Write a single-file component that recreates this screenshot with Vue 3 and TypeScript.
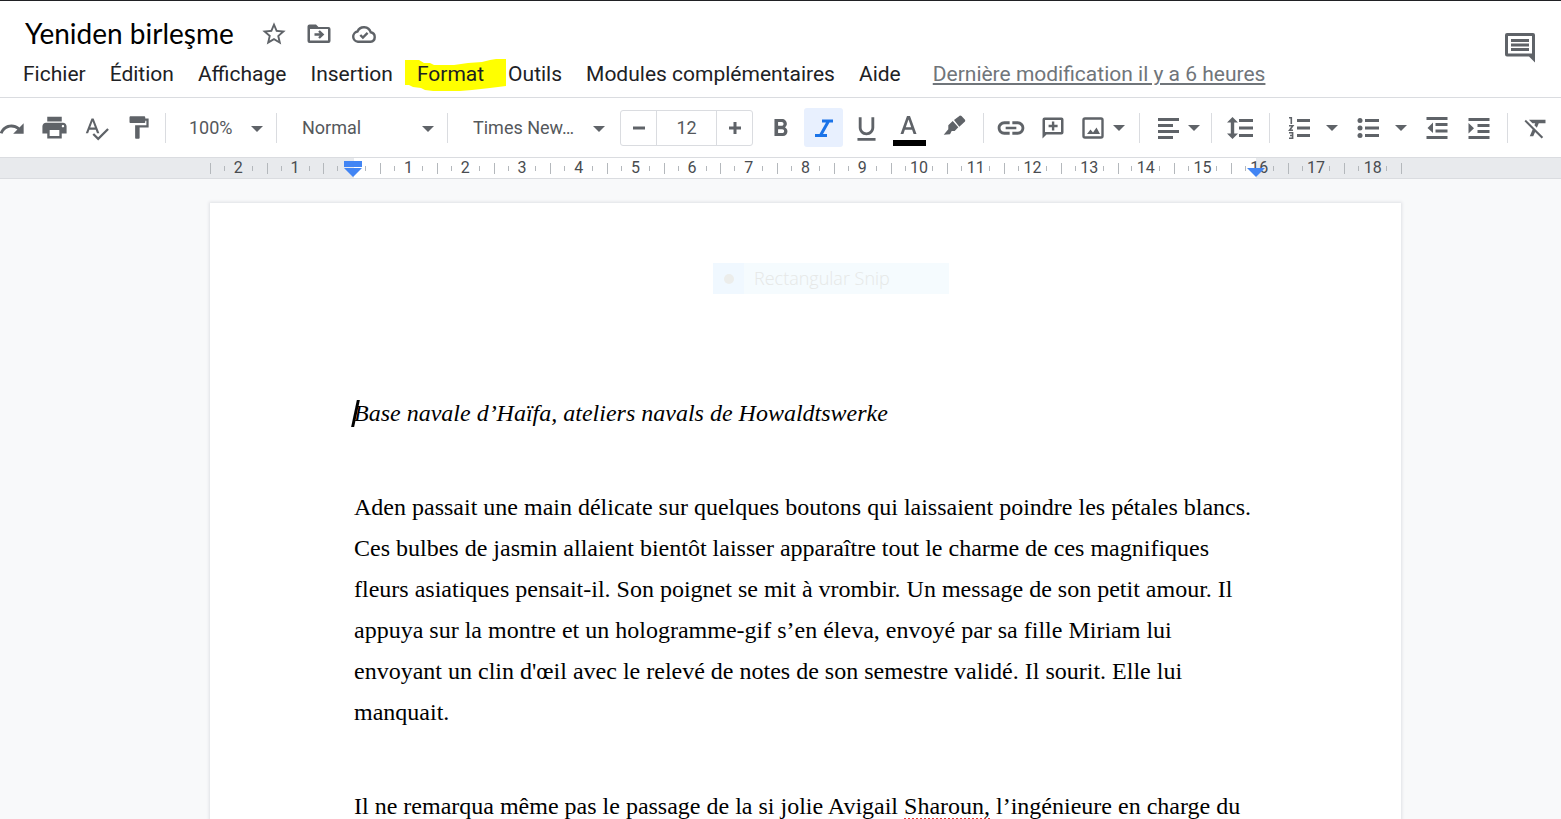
<script setup lang="ts">
import { ref } from 'vue'

const title = ref('Yeniden birleşme')
const fontSize = ref(12)
const menusBefore = ['Fichier', 'Édition', 'Affichage', 'Insertion']
const menusAfter = ['Outils', 'Modules complémentaires', 'Aide']
const rulerCells = ['2', '1', '', ...Array.from({ length: 18 }, (_, i) => String(i + 1))]
</script>

<template>
  <div class="app">
    <header class="header">
      <div class="header-main">
        <div class="title-row">
          <h1 class="title">{{ title }}</h1>
          <button class="icon-btn title-btn" aria-label="Suivre">
            <svg width="28" height="28" viewBox="0 0 24 24"><path d="M22 9.24l-7.19-.62L12 2 9.19 8.63 2 9.24l5.46 4.73L5.82 21 12 17.27 18.18 21l-1.63-7.03L22 9.24zM12 15.4l-3.76 2.27 1-4.28-3.32-2.88 4.38-.38L12 6.1l1.71 4.04 4.38.38-3.32 2.88 1 4.28L12 15.4z" /></svg>
          </button>
          <button class="icon-btn title-btn" aria-label="Déplacer">
            <svg width="28" height="28" viewBox="0 0 28 28">
              <path d="M4.5 4.500h6.500l2.500 2.500h10a2 2 0 0 1 2 2v12a2 2 0 0 1-2 2h-19a2 2 0 0 1-2-2V6.500a2 2 0 0 1 2-2zM5 9v11.500h18V9z" fill-rule="evenodd" />
              <path d="M9.500 14.500h8M14 11l3.600 3.500L14 18" class="line" />
            </svg>
          </button>
          <button class="icon-btn title-btn" aria-label="État du document">
            <svg width="28" height="28" viewBox="0 0 28 28">
              <path d="M8 21.800a5.200 5.200 0 0 1-.5-10.300A7 7 0 0 1 20.700 12.300 4.800 4.800 0 0 1 20.500 21.800z" class="line" />
              <path d="M10.300 15l2.600 2.600 4.700-4.700" class="line" />
            </svg>
          </button>
        </div>
        <nav class="menus">
          <button v-for="m in menusBefore" :key="m" class="menu">{{ m }}</button>
          <button class="menu menu-marked">
            <svg class="marker" width="101" height="34" viewBox="0 0 101 34"><path d="M0 1h14l5 3h6l4 2h20l14-2 14-1 8-2 6-1h10v27l-16 2-18 2-12 1H28l-8-1-4-2-8-1-4-2H0z" /></svg>
            <span>Format</span>
          </button>
          <button v-for="m in menusAfter" :key="m" class="menu">{{ m }}</button>
          <a class="last-edit" href="#">Dernière modification il y a 6 heures</a>
        </nav>
      </div>
      <button class="icon-btn comments" aria-label="Commentaires">
        <svg width="32" height="32" viewBox="0 0 32 32">
          <path d="M3 1h26a2 2 0 0 1 2 2v27.500l-6-6H3a2 2 0 0 1-2-2V3a2 2 0 0 1 2-2zM4 4v17.500h24V4z" fill-rule="evenodd" />
          <path d="M7 7h18v3H7zM7 11.500h18v3H7zM7 16h18v3H7z" />
        </svg>
      </button>
    </header>

    <div class="toolbar" role="toolbar" aria-label="Mise en forme">
      <div class="group history">
        <button class="icon-btn" aria-label="Rétablir">
          <svg width="28" height="28" viewBox="0 -1 24 24"><path d="M18.400 10.600C16.550 8.990 14.150 8 11.500 8c-4.650 0-8.580 3.030-9.960 7.220L3.900 16c1.050-3.190 4.050-5.500 7.600-5.500 1.950 0 3.730.72 5.120 1.880L13 16h9V7z" /></svg>
        </button>
        <button class="icon-btn" aria-label="Imprimer">
          <svg width="29" height="29" viewBox="0 0 24 24"><path d="M19 8H5c-1.660 0-3 1.340-3 3v6h4v4h12v-4h4v-6c0-1.660-1.340-3-3-3zm-3 11H8v-5h8v5zm3-7c-.55 0-1-.45-1-1s.45-1 1-1 1 .45 1 1-.45 1-1 1zm-1-9H6v4h12V3z" /></svg>
        </button>
        <button class="icon-btn" aria-label="Orthographe">
          <svg width="27" height="27" viewBox="0 -1 24 24"><path d="M12.450 16h2.090L9.430 3H7.570L2.460 16h2.090l1.120-3h5.640l1.140 3zm-6.020-5L8.500 5.480 10.570 11H6.430zm15.160.59l-8.090 8.090L9.830 16l-1.410 1.410 5.090 5.090L23 13l-1.410-1.410z" /></svg>
        </button>
        <button class="icon-btn" aria-label="Reproduire la mise en forme">
          <svg width="27" height="27" viewBox="0 0 24 24"><path d="M18 4V3c0-.55-.45-1-1-1H5c-.55 0-1 .45-1 1v4c0 .55.45 1 1 1h12c.55 0 1-.45 1-1V6h1v4H9v11c0 .55.45 1 1 1h2c.55 0 1-.45 1-1v-9h8V4h-3z" /></svg>
        </button>
      </div>
      <span class="sep"></span>
      <div class="drop drop-zoom">
        <select aria-label="Zoom"><option>100%</option></select>
        <svg class="caret" width="12" height="6" viewBox="0 0 12 6"><path d="M0 0h12L6 6z" /></svg>
      </div>
      <span class="sep"></span>
      <div class="drop">
        <select aria-label="Style"><option>Normal</option></select>
        <svg class="caret" width="12" height="6" viewBox="0 0 12 6"><path d="M0 0h12L6 6z" /></svg>
      </div>
      <span class="sep"></span>
      <div class="drop">
        <select aria-label="Police"><option>Times New…</option></select>
        <svg class="caret" width="12" height="6" viewBox="0 0 12 6"><path d="M0 0h12L6 6z" /></svg>
      </div>
      <div class="stepper">
        <button aria-label="Réduire la taille" @click="fontSize--">
          <svg width="14" height="14" viewBox="0 0 14 14"><path d="M1 5.500h12v3H1z" /></svg>
        </button>
        <input v-model="fontSize" aria-label="Taille de police" />
        <button aria-label="Augmenter la taille" @click="fontSize++">
          <svg width="14" height="14" viewBox="0 0 14 14"><path d="M5.500 1h3v4.500H13v3H8.500V13h-3V8.500H1v-3h4.500z" /></svg>
        </button>
      </div>
      <div class="group format">
        <button class="icon-btn" aria-label="Gras">
          <svg width="29" height="29" viewBox="0 -1 24 24"><path d="M15.600 10.790c.97-.67 1.650-1.770 1.650-2.790 0-2.260-1.750-4-4-4H7v14h7.040c2.090 0 3.710-1.700 3.710-3.790 0-1.520-.86-2.820-2.150-3.420zM10 6.500h3c.83 0 1.500.67 1.500 1.500s-.67 1.500-1.500 1.500h-3v-3zm3.500 9H10v-3h3.500c.83 0 1.500.67 1.500 1.500s-.67 1.500-1.500 1.500z" /></svg>
        </button>
        <button class="icon-btn active" aria-label="Italique" aria-pressed="true">
          <svg width="28" height="28" viewBox="0 0 28 28"><path d="M12 5.500h11v3h-3.500L13 20h4v3H5v-3h4.500L16 8.500h-4z" /></svg>
        </button>
        <button class="icon-btn" aria-label="Souligné">
          <svg width="31" height="31" viewBox="0 -1 24 24"><path d="M12 17c3.310 0 6-2.690 6-6V3h-2.200v8c0 2.100-1.700 3.800-3.800 3.800S8.200 13.100 8.200 11V3H6v8c0 3.310 2.690 6 6 6zm-7 2.200v2h14v-2H5z" /></svg>
        </button>
        <button class="icon-btn" aria-label="Couleur du texte">
          <svg width="33" height="36" viewBox="0 0 33 36">
            <path d="M14 6h3l6.500 18h-2.900l-1.500-4.300h-7.200L10.400 24H7.500zM12.800 17.200h5.400L15.500 9.400z" fill-rule="evenodd" />
            <path d="M0 30h33v6H0z" class="ink" />
          </svg>
        </button>
        <button class="icon-btn" aria-label="Surlignage">
          <svg width="28" height="28" viewBox="0 0 28 28"><path d="M15 6L21 1.500q1 0 1.500.5l3.500 3.700q.5 1 0 1.800L20.300 12.700zM13.700 7l5.600 6.300-3.600 3.700h-3L11 20.300l-6.300.4 4.600-5.400v-4z" /></svg>
        </button>
      </div>
      <span class="sep"></span>
      <div class="group insert">
        <button class="icon-btn" aria-label="Insérer un lien">
          <svg width="32" height="32" viewBox="0 0 24 24"><path d="M4.100 12c0-1.600 1.300-2.900 2.900-2.900h4V7H7c-2.760 0-5 2.240-5 5s2.240 5 5 5h4v-2.100H7c-1.600 0-2.900-1.300-2.900-2.900zM8 13h8v-2H8v2zm9-6h-4v2.100h4c1.600 0 2.900 1.300 2.900 2.900s-1.300 2.900-2.900 2.900h-4V17h4c2.760 0 5-2.240 5-5s-2.240-5-5-5z" /></svg>
        </button>
        <button class="icon-btn" aria-label="Ajouter un commentaire">
          <svg width="28" height="28" viewBox="0 0 28 28">
            <path d="M5.500 3.500h17a2 2 0 0 1 2 2v13a2 2 0 0 1-2 2h-15l-4 4v-19a2 2 0 0 1 2-2zM6 6v12h16V6z" fill-rule="evenodd" />
            <path d="M12.900 7.500h2.400v3.300h3.300v2.400h-3.300v3.300h-2.400v-3.300H9.600v-2.400h3.300z" />
          </svg>
        </button>
        <button class="icon-btn slim" aria-label="Insérer une image">
          <svg width="28" height="28" viewBox="0 0 28 28">
            <rect x="4.500" y="4.500" width="19" height="19" rx="1.500" class="line" />
            <path d="M8 20l3.500-4.500 2.500 3 3.500-5L21 20z" />
          </svg>
        </button>
        <button class="icon-btn arrow" aria-label="Options d’image"><svg width="12" height="6" viewBox="0 0 12 6"><path d="M0 0h12L6 6z" /></svg></button>
      </div>
      <span class="sep"></span>
      <div class="group align">
        <button class="icon-btn slim" aria-label="Aligner">
          <svg width="28" height="28" viewBox="0 0 28 28"><path d="M4 4h21v3H4zM4 10h15v3H4zM4 16h21v3H4zM4 22h15v3H4z" /></svg>
        </button>
        <button class="icon-btn arrow" aria-label="Options d’alignement"><svg width="12" height="6" viewBox="0 0 12 6"><path d="M0 0h12L6 6z" /></svg></button>
      </div>
      <span class="sep"></span>
      <div class="group spacing">
        <button class="icon-btn slim" aria-label="Interligne">
          <svg width="28" height="28" viewBox="0 0 28 28"><path d="M6.500 3l5.500 5.500H8.200v11H12L6.500 25 1 19.500h3.800v-11H1zM13 5h14v3H13zM13 12.500h14v3H13zM13 20h14v3H13z" /></svg>
        </button>
      </div>
      <span class="sep"></span>
      <div class="group lists">
        <button class="icon-btn slim" aria-label="Liste numérotée">
          <svg width="28" height="28" viewBox="0 0 28 28">
            <path d="M12 5h13v3H12zM12 12.500h13v3H12zM12 20h13v3H12z" />
            <path d="M4 3.800h2.300V10M4 11.800h3.800L4.600 16.300H8M4 18.800h3.600v5.400H4M5 21.500h2.500" class="thin" />
          </svg>
        </button>
        <button class="icon-btn arrow wide" aria-label="Options de liste numérotée"><svg width="12" height="6" viewBox="0 0 12 6"><path d="M0 0h12L6 6z" /></svg></button>
        <button class="icon-btn slim" aria-label="Liste à puces">
          <svg width="28" height="28" viewBox="0 0 28 28">
            <circle cx="6" cy="6.500" r="2.500" /><circle cx="6" cy="14" r="2.500" /><circle cx="6" cy="21.500" r="2.500" />
            <path d="M11 5h14v3H11zM11 12.500h14v3H11zM11 20h14v3H11z" />
          </svg>
        </button>
        <button class="icon-btn arrow wide" aria-label="Options de liste à puces"><svg width="12" height="6" viewBox="0 0 12 6"><path d="M0 0h12L6 6z" /></svg></button>
        <button class="icon-btn slim" aria-label="Diminuer le retrait">
          <svg width="28" height="28" viewBox="0 0 28 28"><path d="M3.500 3h21v3h-21zM12.500 9h12v3h-12zM12.500 15.500h12v3h-12zM3.500 22h21v3h-21zM10 8.500v10.500L4.500 14z" /></svg>
        </button>
        <button class="icon-btn slim" aria-label="Augmenter le retrait">
          <svg width="28" height="28" viewBox="0 0 28 28"><path d="M3.500 4h21v3h-21zM12.500 10h12v3h-12zM12.500 16h12v3h-12zM3.500 22h21v3h-21zM3.500 9v10.500L9 14.200z" /></svg>
        </button>
      </div>
      <span class="sep"></span>
      <div class="group clear">
        <button class="icon-btn slim" aria-label="Supprimer la mise en forme">
          <svg width="28" height="28" viewBox="-1 0 24 24"><path d="M3.270 5L2 6.270l6.970 6.970L6.500 19h3l1.570-3.660L16.730 21 18 19.730 3.550 5.270zM6 5v.18L8.820 8h2.400l-.72 1.680 2.100 2.100L14.210 8H20V5H6z" /></svg>
        </button>
      </div>
    </div>

    <div class="ruler">
      <div class="track">
        <div class="zone"></div>
        <div v-for="(n, i) in rulerCells" :key="i" class="cell"><span>{{ n }}</span></div>
        <svg class="indent-left" width="18" height="16" viewBox="0 0 18 16"><path d="M0 0h18v6H0zM0 7h18l-9 9z" /></svg>
        <svg class="indent-right" width="18" height="9" viewBox="0 0 18 9"><path d="M0 0h18l-9 9z" /></svg>
      </div>
    </div>

    <main class="canvas">
      <article class="page">
        <p class="lead"><span class="cursor"></span><em>Base navale d’Haïfa, ateliers navals de Howaldtswerke</em></p>
        <p>Aden passait une main délicate sur quelques boutons qui laissaient poindre les pétales blancs. Ces bulbes de jasmin allaient bientôt laisser apparaître tout le charme de ces magnifiques fleurs asiatiques pensait-il. Son poignet se mit à vrombir. Un message de son petit amour. Il appuya sur la montre et un hologramme-gif s’en éleva, envoyé par sa fille Miriam lui envoyant un clin d'œil avec le relevé de notes de son semestre validé. Il sourit. Elle lui manquait.</p>
        <p>Il ne remarqua même pas le passage de la si jolie Avigail <span class="typo">Sharoun,</span> l’ingénieure en charge du</p>
        <div class="snip"><span class="snip-dot"></span><span class="snip-label">Rectangular Snip</span></div>
      </article>
    </main>
  </div>
</template>

<style>
body {
  margin: 0;
}
</style>

<style scoped>
.app {
  height: 100vh;
  display: flex;
  flex-direction: column;
  overflow: hidden;
  box-sizing: border-box;
  border-top: 1px solid #202124;
  background: #f8f9fa;
  color: #202124;
  font-family: Roboto, "Liberation Sans", sans-serif;
}
button,
select,
input {
  font: inherit;
  color: inherit;
  border: 0;
  padding: 0;
  margin: 0;
  background: none;
}
svg {
  display: block;
  flex: none;
  fill: #5f6368;
}
.line {
  fill: none;
  stroke: #5f6368;
  stroke-width: 2.4;
}
.thin {
  fill: none;
  stroke: #5f6368;
  stroke-width: 1.6;
}
.ink {
  fill: #000;
}
.header {
  display: flex;
  justify-content: space-between;
  flex: none;
  background: #fff;
  border-bottom: 1px solid #dadce0;
  padding: 14px 25px 2px 23px;
}
.title-row {
  display: flex;
  align-items: center;
  height: 38px;
}
.title {
  margin: 0 18px 0 2px;
  padding-bottom: 2px;
  font: 400 28px/36px Lato, "Open Sans", sans-serif;
  color: #000;
  white-space: nowrap;
}
.icon-btn {
  display: flex;
  align-items: center;
  justify-content: center;
  flex: none;
  width: 42px;
  height: 39px;
  border-radius: 3px;
}
.title-btn {
  width: 45px;
}
.menus {
  display: flex;
  align-items: center;
  gap: 24px;
  height: 42px;
  font-size: 21px;
  line-height: 28px;
  white-space: nowrap;
}
.menu-marked {
  position: relative;
}
.menu-marked span {
  position: relative;
}
.marker {
  position: absolute;
  left: -12px;
  top: -1px;
  fill: #ff0;
}
.last-edit {
  margin-left: 8px;
  color: #70757a;
  text-decoration: underline;
}
.comments {
  width: 32px;
  height: 32px;
  margin-top: 17px;
}
.toolbar {
  display: flex;
  align-items: center;
  flex: none;
  height: 59px;
  overflow: hidden;
  background: #fff;
  border-bottom: 1px solid #dadce0;
  color: #55585c;
  font-size: 18px;
}
.sep {
  flex: none;
  width: 1px;
  height: 30px;
  margin: 0 5px;
  background: #dadce0;
}
.group {
  display: flex;
  flex: none;
  align-items: center;
}
.history {
  margin-left: -9px;
  padding-right: 1px;
}
.drop {
  position: relative;
  flex: none;
  width: 160px;
}
.drop-zoom {
  width: 100px;
}
.drop select {
  width: 100%;
  height: 36px;
  padding-left: 20px;
  appearance: none;
}
.drop-zoom select {
  padding-left: 18px;
}
.caret {
  position: absolute;
  right: 8px;
  top: 16px;
  pointer-events: none;
}
.stepper {
  display: flex;
  flex: none;
  box-sizing: border-box;
  width: 133px;
  height: 36px;
  margin: 0 6px 0 7px;
  border: 1px solid #dadce0;
  border-radius: 3px;
}
.stepper button {
  display: flex;
  flex: 1;
  align-items: center;
  justify-content: center;
}
.stepper input {
  width: 59px;
  text-align: center;
  border: solid #dadce0;
  border-width: 0 1px;
}
.format {
  padding-right: 4px;
}
.format .icon-btn {
  width: 39px;
  margin: 0 2px;
}
.active {
  background: #e8f0fe;
}
.active svg {
  fill: #1a73e8;
}
.slim {
  width: 28px;
}
.arrow {
  width: 24px;
}
.arrow.wide {
  width: 38px;
}
.insert {
  padding: 0 3px 0 1px;
}
.insert .slim {
  margin-left: 5px;
}
.align {
  padding-left: 9px;
}
.spacing {
  padding: 0 10px 0 9px;
}
.lists {
  padding: 0 9px 0 10px;
}
.lists .wide + .slim {
  margin-left: 3px;
}
.lists .slim + .slim {
  margin-left: 14px;
}
.clear {
  padding-left: 8px;
}
.ruler {
  flex: none;
  padding-left: 50px;
  background: #e8eaed;
  border-bottom: 1px solid #dadce0;
}
.track {
  position: relative;
  display: flex;
  max-width: 1191px;
  height: 20px;
  margin: 0 auto;
}
.zone {
  position: absolute;
  left: 144px;
  right: 145px;
  top: 0;
  bottom: 0;
  background: #fff;
}
.cell {
  position: relative;
  flex: 1;
  display: flex;
  align-items: center;
  justify-content: center;
  font-size: 16px;
  line-height: 20px;
  color: #494c50;
  background:
    linear-gradient(#b4b8bc, #b4b8bc) 0 5px / 1px 11px no-repeat,
    linear-gradient(#b4b8bc, #b4b8bc) 25% 8px / 1px 5px no-repeat,
    linear-gradient(#b4b8bc, #b4b8bc) 75% 8px / 1px 5px no-repeat;
}
.track::after {
  content: "";
  position: absolute;
  right: -1px;
  top: 5px;
  width: 1px;
  height: 11px;
  background: #b4b8bc;
}
.indent-left,
.indent-right {
  position: absolute;
  fill: #4285f4;
}
.indent-left {
  left: 134px;
  top: 3px;
}
.indent-right {
  right: 136px;
  top: 10px;
}
.canvas {
  flex: 1;
  min-height: 0;
  padding: 24px 0 0 50px;
  background: #f8f9fa;
}
.page {
  position: relative;
  box-sizing: border-box;
  max-width: 1191px;
  min-height: 100%;
  margin: 0 auto;
  padding: 190px 145px 0 144px;
  background: #fff;
  box-shadow: 0 0 3px 1px #dfe1e5;
  font: 24px/41px "Liberation Serif", "Times New Roman", serif;
  color: #000;
}
.page p {
  margin: 0 0 53px;
}
.lead {
  position: relative;
}
.cursor {
  position: absolute;
  left: 0;
  top: 7px;
  width: 3px;
  height: 27px;
  background: #000;
  transform: skewX(-12deg);
}
.typo {
  text-decoration: underline dotted #e53935 2px;
  text-underline-offset: 4px;
}
.snip {
  position: absolute;
  left: 503px;
  top: 60px;
  display: flex;
  align-items: center;
  width: 236px;
  height: 31px;
  background: #f5fbfe;
  font: 18px/31px "Open Sans", "Noto Sans", sans-serif;
  font-weight: 300;
  color: #e6e8e7;
}
.snip-dot {
  display: flex;
  align-items: center;
  justify-content: center;
  width: 31px;
  height: 31px;
  background: #f0f8ff;
}
.snip-dot::after {
  content: "";
  width: 10px;
  height: 10px;
  border-radius: 50%;
  background: #ecedeb;
}
.snip-label {
  margin-left: 10px;
}
</style>
